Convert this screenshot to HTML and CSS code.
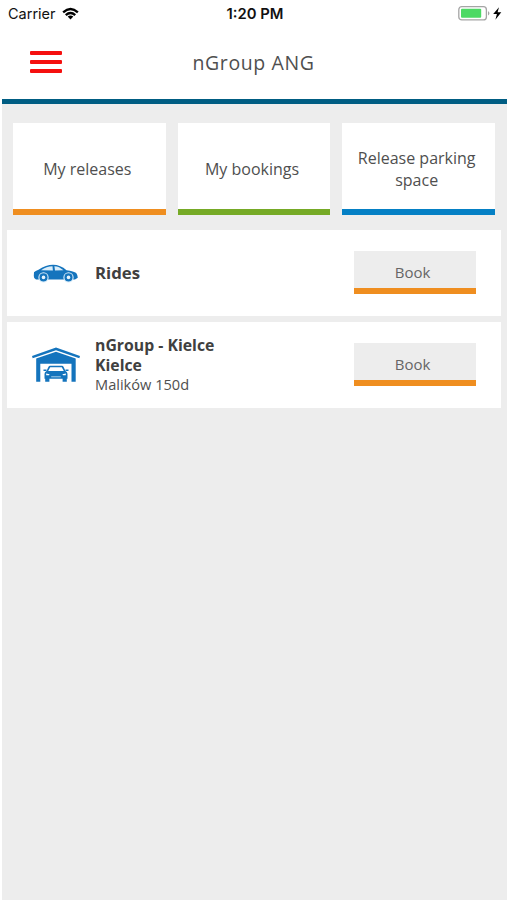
FILE: index.html
```html
<!DOCTYPE html>
<html lang="en">
<head>
<meta charset="utf-8">
<title>nGroup ANG</title>
<link rel="stylesheet" href="styles.css">
</head>
<body>
<div class="status">
  <div class="carrier"><span>Carrier</span>
    <svg width="17" height="13" viewBox="0 0 18 13" fill="none" stroke="#000" stroke-width="2.5"><path d="M1.2 5.2Q9-1.8 16.8 5.2M4 8.2Q9 3.7 14 8.2"/><path d="M6 9.7Q9 7.5 12 9.7L9 12.8Z" fill="#000" stroke="none"/></svg>
  </div>
  <time class="time">1:20 PM</time>
  <svg class="battery" width="45" height="16" viewBox="0 0 45 16"><rect x="1.8" y="1.7" width="27.6" height="13.2" rx="3" fill="#fff" stroke="#a5a5a5" stroke-width="1.3"/><rect x="4" y="3.8" width="20.2" height="9" rx="1" fill="#4cd964"/><path d="M31 6Q34 8.3 31 10.5Z" fill="#a5a5a5"/><path d="M42 2.3 36.2 9H39.9L38.4 14.8 44.3 7.2H40.6Z" fill="#000"/></svg>
</div>
<header class="header">
  <div class="menu"><i></i><i></i><i></i></div>
  <h1>nGroup ANG</h1>
</header>
<main class="main">
  <nav class="tabs">
    <a class="tab orange"><span>My releases</span></a>
    <a class="tab green"><span>My bookings</span></a>
    <a class="tab blue"><span>Release parking space</span></a>
  </nav>
  <section class="list">
    <article class="card">
      <div class="icon car">
        <svg width="46" height="19" viewBox="0 0 46 19"><path fill="#1474bd" d="M1 8.2Q2.2 6.7 5.5 5.7Q13 .7 20 .7Q27.5.7 33.5 6.2Q41 7 43.2 9.1Q44.6 11 44.8 13.7L42 15.5H3Q.6 14.5.8 12Z"/><path fill="#d9edfa" d="M8 6.2Q13.5 2.3 19.5 2.2L19.9 6.4ZM21.4 2.2Q26.3 2.4 30.5 6.3L22 6.4Z"/><g fill="#1474bd" stroke="#d9edfa" stroke-width="1.1"><circle cx="10.5" cy="13.4" r="4.6"/><circle cx="35.5" cy="13.4" r="4.6"/></g><g fill="#e8f4fc"><circle cx="10.5" cy="13.4" r="1.8"/><circle cx="35.5" cy="13.4" r="1.8"/></g></svg>
      </div>
      <div class="info rides"><strong>Rides</strong></div>
      <button class="book">Book</button>
    </article>
    <article class="card second">
      <div class="icon">
        <svg width="50" height="36" viewBox="0 0 50 36"><g fill="#1474bd"><path d="M25 .5 49 9 48.3 11.2 25 3.3 1.7 11.2 1 9Z"/><path d="M25 4.8 44.7 11.5V34.8H40.5V16.8H9.3V34.8H5.2V11.5Z"/><path d="M15.5 24 17.5 19.8Q18 18.8 19 18.8H31Q32 18.8 32.5 19.8L34.5 24Q36.5 25 36.5 27V31.8H35.8V34.8H31.6V31.8H18.4V34.8H14.2V31.8H13.5V27Q13.5 25 15.5 24Z"/><rect x="12.5" y="22.5" width="3" height="1.5"/><rect x="34.5" y="22.5" width="3" height="1.5"/></g><path fill="#fff" d="M17.2 24 19.2 20.3H30.8L32.8 24ZM15 26.5 18.6 27.3 18 28.3H15.3ZM35 26.5 31.4 27.3 32 28.3H34.7Z"/><path fill="#a8cfea" d="M20.2 29.3H29.8V30.3H20.2Z"/></svg>
      </div>
      <div class="info"><strong>nGroup - Kielce</strong><strong>Kielce</strong><span>Malików 150d</span></div>
      <button class="book">Book</button>
    </article>
  </section>
</main>
</body>
</html>
```
FILE: styles.css
```css
* { box-sizing: border-box; }
body {
  margin: 0;
  height: 900px;
  display: flex;
  flex-direction: column;
  background: #fff;
  color: #4f4f4f;
  font-family: "Open Sans", sans-serif;
}
.status {
  height: 28px;
  padding: 0 5px 0 8px;
  display: grid;
  grid-template-columns: 1fr auto 1fr;
  align-items: center;
  color: #111;
  font: 14.5px/28px Inter, sans-serif;
}
.carrier { display: flex; align-items: center; gap: 6px; }
.carrier svg { margin-top: -1px; }
.time { font-weight: 600; font-size: 14.8px; }
.battery { justify-self: end; margin-top: -2px; }
.header {
  height: 70.5px;
  padding-bottom: 3px;
  display: grid;
  grid-template-columns: 100px 1fr 100px;
  align-items: center;
}
.menu { display: flex; flex-direction: column; gap: 5px; padding-left: 30px; }
.menu i { width: 32px; height: 4px; border-radius: 1px; background: #f5100f; }
h1 {
  margin: 0;
  padding-top: 2px;
  text-align: center;
  font-size: 19.5px;
  font-weight: 400;
  letter-spacing: .6px;
}
.main {
  flex: 1;
  margin-left: 2px;
  border-top: 5px solid #005d83;
  background: #ededed;
}
.tabs {
  display: grid;
  grid-template-columns: repeat(3, 1fr);
  gap: 12px;
  padding: 19.5px 12px 0 11px;
}
.tab {
  height: 92px;
  display: flex;
  align-items: center;
  justify-content: center;
  padding: 0 14px 0 10px;
  background: #fff;
  border-bottom: 6px solid;
  text-align: center;
  font-size: 16px;
  line-height: 22px;
}
.tab span { color: #4f4f4f; padding-top: 6px; }
.orange { border-color: #ef8e20; }
.green { border-color: #76aa26; }
.blue { border-color: #0580c5; }
.list { display: grid; gap: 6px; padding: 15px 6px 0 5px; }
.card {
  height: 86px;
  display: grid;
  grid-template-columns: 64px 1fr 122px;
  align-items: center;
  padding: 0 25px 0 24px;
  background: #fff;
}
.icon svg { display: block; }
.car { padding-left: 2px; }
.info {
  display: flex;
  flex-direction: column;
  padding-bottom: 1px;
  font-size: 14.6px;
  line-height: 20px;
}
.info span { margin-top: -1px; }
.info strong { color: #404040; font-size: 15.8px; }
.rides { padding-bottom: 0; }
.rides strong { font-size: 16.8px; }
.book {
  height: 43px;
  margin-bottom: 1px;
  padding: 5px 5px 0 0;
  border: 0;
  border-bottom: 6px solid #ef8e20;
  background: #ededed;
  color: #666;
  font: 15px/20px "Open Sans", sans-serif;
}
.second .book { margin-bottom: 2px; }
```
